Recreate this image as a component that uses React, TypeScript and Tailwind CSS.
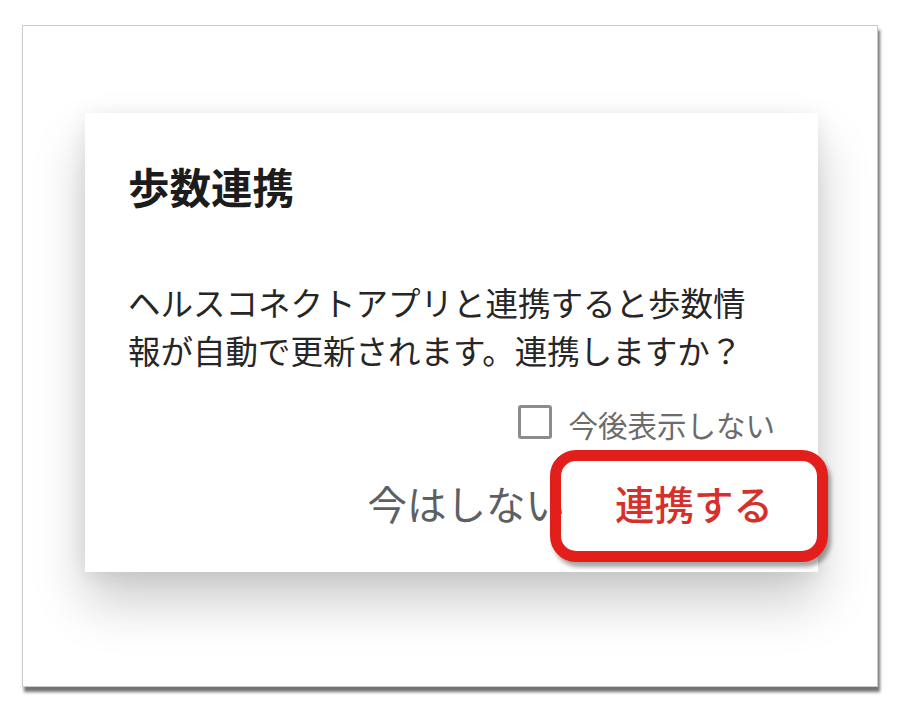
const jp = { fontFamily: '"Noto Sans CJK JP", "Noto Sans", sans-serif' };

function Checkbox() {
  return <span className="block w-[34px] h-[34px] rounded-[3px] border-[3px] border-[#8c8c8c] bg-white" />;
}

function LinkDialog() {
  return (
    <div className="relative w-[733px] h-[459px] bg-white shadow-[0_30px_50px_rgba(0,0,0,0.2),0_4px_20px_rgba(0,0,0,0.08)] pt-[53px] px-[43px]">
      <h2 className="text-[41.5px] leading-[40px] font-bold text-[#1c1c1c]">歩数連携</h2>

      <p className="mt-[72px] text-[32.5px] leading-[48px] text-[#262626]">
        ヘルスコネクトアプリと連携すると歩数情
        <br />
        報が自動で更新されます。連携しますか？
      </p>

      <label className="mt-[31px] flex items-center justify-end gap-[16px] h-[34px]">
        <Checkbox />
        <span className="text-[29.5px] leading-[34px] text-[#6b6b6b] pt-[4px]">今後表示しない</span>
      </label>

      <div className="mt-[40px] flex items-center justify-end gap-[50px] h-[48px] pr-[2px]">
        <button className="text-[39.5px] leading-[48px] text-[#5c5f63]">今はしない</button>
        <button className="text-[39.5px] leading-[48px] font-medium text-[#d7302b]">連携する</button>
      </div>

      {/* red callout drawn over the confirm button */}
      <div className="absolute left-[465px] top-[337px] w-[278px] h-[112px] rounded-[26px] border-[11px] border-[#e21f1b] shadow-[3px_5px_4px_rgba(0,0,0,0.35)]" />
    </div>
  );
}

export default function App() {
  return (
    <div className="w-[916px] h-[711px] bg-white pt-[25px] pl-[22px]" style={jp}>
      <div className="w-[856px] h-[662px] bg-white border border-[#cbcbcb] shadow-[2px_5px_3px_rgba(0,0,0,0.55)] pt-[87px] pl-[62px]">
        <LinkDialog />
      </div>
    </div>
  );
}
